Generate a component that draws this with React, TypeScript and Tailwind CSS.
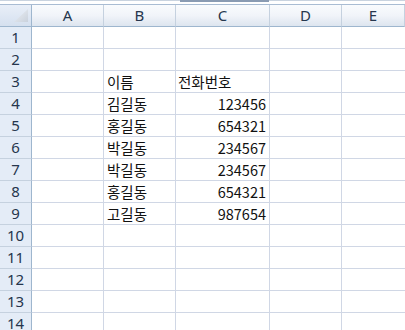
import React from "react";

const cols = ["A", "B", "C", "D", "E"];
const data: Record<number, { b?: string; c?: string; cRight?: boolean }> = {
  3: { b: "이름", c: "전화번호" },
  4: { b: "김길동", c: "123456", cRight: true },
  5: { b: "홍길동", c: "654321", cRight: true },
  6: { b: "박길동", c: "234567", cRight: true },
  7: { b: "박길동", c: "234567", cRight: true },
  8: { b: "홍길동", c: "654321", cRight: true },
  9: { b: "고길동", c: "987654", cRight: true },
};

const cellFont = {
  fontFamily: '"Noto Sans CJK KR", "Noto Sans", sans-serif',
};

export default function App() {
  const rows = Array.from({ length: 14 }, (_, i) => i + 1);
  return (
    <div
      className="w-[405px] h-[330px] overflow-hidden bg-white"
      style={{ fontFamily: '"Noto Sans", "Noto Sans CJK KR", sans-serif' }}
    >
      {/* top strip */}
      <div className="relative h-[5px] bg-white border-t border-[#c9d3df] border-b border-b-[#a9bcd3]">
        <div className="absolute left-[180px] top-[-1px] w-[89px] h-[2px] bg-[#8a9bb2]" />
      </div>
      <div className="grid grid-cols-[32px_72px_72px_94px_72px_1fr]">
        {/* header row */}
        <div className="relative h-[22px] bg-gradient-to-b from-[#e9eff8] to-[#d5e0ef] border-r border-b border-[#9eb6ce]">
          <div
            className="absolute right-[3px] bottom-[4px] w-[14px] h-[13px] bg-gradient-to-br from-[#eef1f5] to-[#c9d1dc]"
            style={{ clipPath: "polygon(100% 0, 100% 100%, 0 100%)" }}
          />
        </div>
        {cols.map((c) => (
          <div
            key={c}
            className="h-[22px] flex items-center justify-center bg-gradient-to-b from-[#f9fbfd] via-[#f1f4f9] to-[#dde5ef] border-r border-r-[#c5d1df] border-b border-b-[#9eb6ce] text-[15px] text-[#26364d]"
          >
            {c}
          </div>
        ))}
        {rows.map((r) => {
          const d = data[r] || {};
          return (
            <React.Fragment key={r}>
              <div className="h-[22px] flex items-center justify-center bg-[#e4ecf7] border-r border-r-[#9eb6ce] border-b border-b-[#c5d1df] text-[15px] text-[#26364d]">
                {r}
              </div>
              <div className="h-[22px] border-r border-b border-[#d0d7e5]" />
              <div
                className="h-[22px] border-r border-b border-[#d0d7e5] flex items-center pl-[3px] text-[14.5px] text-[#111] whitespace-nowrap overflow-visible"
                style={cellFont}
              >
                {d.b}
              </div>
              <div
                className={
                  "h-[22px] border-r border-b border-[#d0d7e5] flex items-center text-[14.5px] text-[#111] whitespace-nowrap " +
                  (d.cRight ? "justify-end pr-[3px]" : "pl-[2px]")
                }
                style={cellFont}
              >
                {d.c}
              </div>
              <div className="h-[22px] border-r border-b border-[#d0d7e5]" />
              <div className="h-[22px] border-b border-[#d0d7e5]" />
            </React.Fragment>
          );
        })}
      </div>
    </div>
  );
}
